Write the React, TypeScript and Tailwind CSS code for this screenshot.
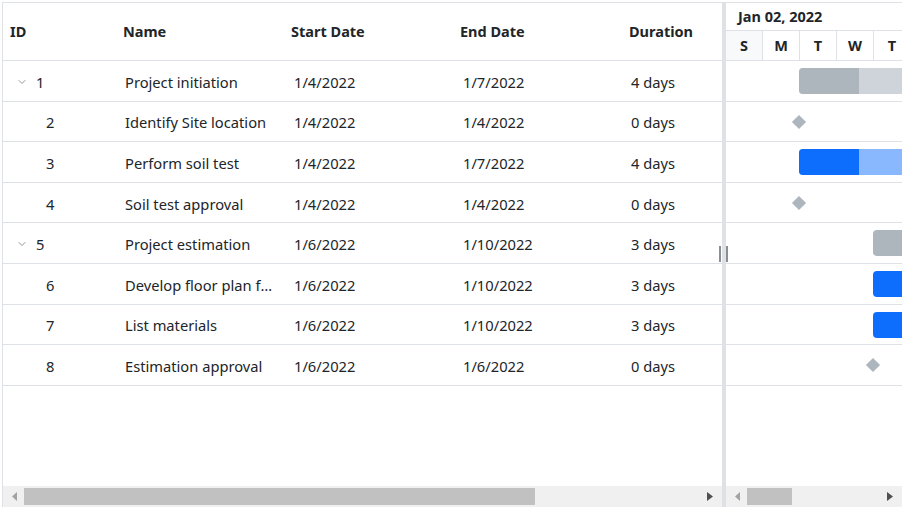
import { ChevronDown } from 'lucide-react';

interface Task {
    id: number;
    name: string;
    start: string;
    end: string;
    duration: string;
    parent?: boolean;
    // chart geometry in days from Jan 02
    offset: number;
    days: number;
    progress: number;
}

const tasks: Task[] = [
    { id: 1, name: 'Project initiation', start: '1/4/2022', end: '1/7/2022', duration: '4 days', parent: true, offset: 2, days: 4, progress: 60 },
    { id: 2, name: 'Identify Site location', start: '1/4/2022', end: '1/4/2022', duration: '0 days', offset: 2, days: 0, progress: 0 },
    { id: 3, name: 'Perform soil test', start: '1/4/2022', end: '1/7/2022', duration: '4 days', offset: 2, days: 4, progress: 60 },
    { id: 4, name: 'Soil test approval', start: '1/4/2022', end: '1/4/2022', duration: '0 days', offset: 2, days: 0, progress: 0 },
    { id: 5, name: 'Project estimation', start: '1/6/2022', end: '1/10/2022', duration: '3 days', parent: true, offset: 4, days: 3, progress: 0 },
    { id: 6, name: 'Develop floor plan for estimation', start: '1/6/2022', end: '1/10/2022', duration: '3 days', offset: 4, days: 3, progress: 0 },
    { id: 7, name: 'List materials', start: '1/6/2022', end: '1/10/2022', duration: '3 days', offset: 4, days: 3, progress: 0 },
    { id: 8, name: 'Estimation approval', start: '1/6/2022', end: '1/6/2022', duration: '0 days', offset: 4, days: 0, progress: 0 },
];

const days = ['S', 'M', 'T', 'W', 'T', 'F', 'S'];
const DAY_W = 37;

function ScrollBar({ thumbLeft, thumbWidth }: { thumbLeft: number, thumbWidth: number }) {
    return <div className="relative h-[21px] bg-[#f0f0f0] shrink-0">
        <svg className="absolute left-[9px] top-[6px]" width="6" height="9" viewBox="0 0 6 9"><path d="M5 0 L0 4.5 L5 9 Z" fill="#a3a3a3" /></svg>
        <div className="absolute top-[2px] h-[17px] bg-[#c1c1c1]" style={{ left: thumbLeft, width: thumbWidth }}></div>
        <svg className="absolute right-[9px] top-[6px]" width="6" height="9" viewBox="0 0 6 9"><path d="M0 0 L6 4.5 L0 9 Z" fill="#505050" /></svg>
    </div>;
}

function Bar({ task }: { task: Task }) {
    const left = task.offset * DAY_W;
    if (task.days === 0) {
        return <div className="absolute top-[15px] w-[10px] h-[10px] bg-[#adb5bd] rotate-45"
            style={{ left: left - 6 }}></div>;
    }
    const width = task.days * DAY_W + 40;
    const base = task.parent ? 'bg-[#ced4da]' : 'bg-[#8ab8fe]';
    const done = task.parent ? 'bg-[#adb5bd]' : 'bg-[#0d6efd]';
    return <div className={`absolute top-[7px] h-[26px] rounded-[4px] overflow-hidden ${task.progress ? base : done}`}
        style={{ left: left - 1, width }}>
        {task.progress > 0 && <div className={`h-full ${done}`} style={{ width: task.progress }}></div>}
    </div>;
}

export default function App() {
    const cols = 'grid grid-cols-[113px_168px_169px_169px_100px]';
    return <div className="w-[902px] h-[507px] overflow-hidden bg-white font-['Noto_Sans',sans-serif] text-[#212529]">
        <div className="relative ml-[2px] mt-[2px] w-[920px] h-[520px] border border-[#dee2e6] flex">
            {/* tree grid */}
            <div className="w-[719px] shrink-0 flex flex-col h-[504px]">
                <div className={`${cols} h-[58px] border-b border-[#dee2e6] items-center text-[14.5px] font-bold`}>
                    <div className="pl-[7px]">ID</div>
                    <div className="pl-[7px]">Name</div>
                    <div className="pl-[7px]">Start Date</div>
                    <div className="pl-[7px]">End Date</div>
                    <div className="pl-[7px]">Duration</div>
                </div>
                {tasks.map(t => <div key={t.id} className={`${cols} h-[40.6px] pt-[2px] border-b border-[#dee2e6] items-center text-[14.7px]`}>
                    <div className="flex items-center pl-[13px]">
                        {t.parent
                            ? <><ChevronDown size={12} strokeWidth={1.5} className="text-[#6c757d]" /><span className="ml-[8px]">{t.id}</span></>
                            : <span className="ml-[30px]">{t.id}</span>}
                    </div>
                    <div className="pl-[9px] pr-[4px] truncate">{t.name}</div>
                    <div className="pl-[10px]">{t.start}</div>
                    <div className="pl-[10px]">{t.end}</div>
                    <div className="pl-[9px]">{t.duration}</div>
                </div>)}
                <div className="flex-1"></div>
                <ScrollBar thumbLeft={21} thumbWidth={511} />
            </div>

            {/* splitter */}
            <div className="relative w-[4px] shrink-0 bg-[#dee2e6] h-[504px]">
                <div className="absolute left-[-3px] top-[243px] w-[2px] h-[16px] bg-[#8a8f94]"></div>
                <div className="absolute left-[4px] top-[243px] w-[2px] h-[16px] bg-[#8a8f94]"></div>
            </div>

            {/* chart */}
            <div className="flex-1 flex flex-col h-[504px] overflow-hidden">
                <div className="h-[58px] border-b border-[#dee2e6] flex flex-col text-[14.5px] font-bold">
                    <div className="h-[28px] border-b border-[#dee2e6] flex items-center pl-[12px]">Jan 02, 2022</div>
                    <div className="flex-1 flex">
                        {days.map((d, i) => <div key={i} className={`w-[37px] shrink-0 border-r border-[#dee2e6] flex items-center justify-center ${i === 0 ? 'bg-[#f8f9fa]' : ''}`}>{d}</div>)}
                    </div>
                </div>
                {tasks.map(t => <div key={t.id} className="relative h-[40.6px] border-b border-[#dee2e6] shrink-0">
                    <Bar task={t} />
                </div>)}
                <div className="flex-1"></div>
                <div className="w-[176px]">
                    <ScrollBar thumbLeft={21} thumbWidth={45} />
                </div>
            </div>
        </div>
    </div>;
}
